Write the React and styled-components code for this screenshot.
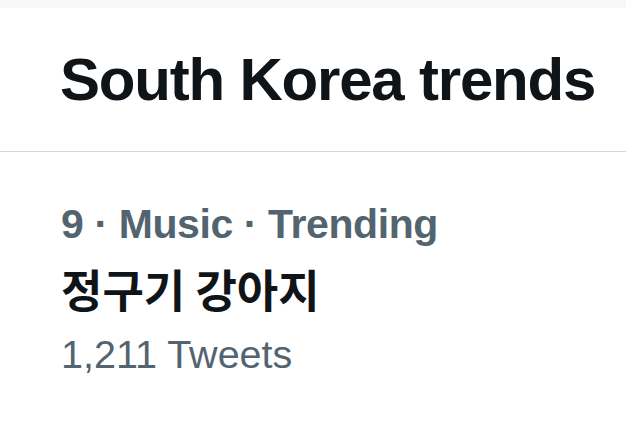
import React from "react";
import styled, { createGlobalStyle } from "styled-components";

const GlobalStyle = createGlobalStyle`
  html, body {
    margin: 0;
    padding: 0;
    background: #ffffff;
  }

  body {
    font-family: "Liberation Sans", Arial, "Noto Sans CJK KR", sans-serif;
    -webkit-font-smoothing: antialiased;
  }
`;

const Page = styled.div`
  width: 626px;
  height: 438px;
  overflow: hidden;
  background: #ffffff;
`;

const TopStrip = styled.div`
  height: 8px;
  background: #f8f8fa;
`;

const Header = styled.header`
  padding: 36px 0 35px 60px;
  border-bottom: 1px solid #d4d6d8;
`;

const Title = styled.h1`
  margin: 0;
  font-size: 60px;
  line-height: 72px;
  font-weight: 700;
  letter-spacing: -1.2px;
  color: #0f1419;
  white-space: nowrap;
`;

const Trend = styled.section`
  display: flex;
  flex-direction: column;
  gap: 14px;
  padding: 48px 0 0 61px;
`;

const Meta = styled.div`
  font-size: 41px;
  line-height: 48px;
  font-weight: 700;
  letter-spacing: -0.4px;
  color: #536471;
  white-space: nowrap;
`;

const Topic = styled.div`
  font-family: "Noto Sans CJK KR", "Liberation Sans", sans-serif;
  font-size: 45px;
  line-height: 54px;
  font-weight: 700;
  color: #0f1419;
  white-space: nowrap;
`;

const Count = styled.div`
  font-size: 39.5px;
  line-height: 48px;
  font-weight: 400;
  color: #536471;
  white-space: nowrap;
`;

export default function App() {
  return (
    <Page>
      <GlobalStyle />
      <TopStrip />
      <Header>
        <Title>South Korea trends</Title>
      </Header>
      <Trend>
        <Meta>9 · Music · Trending</Meta>
        <Topic>정구기 강아지</Topic>
        <Count>1,211 Tweets</Count>
      </Trend>
    </Page>
  );
}
